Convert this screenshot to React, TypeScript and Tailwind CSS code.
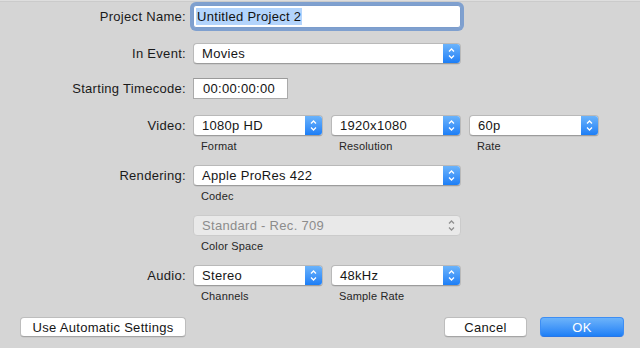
import React from "react";

const FONT = { fontFamily: '"Liberation Sans", Arial, sans-serif' };

// up/down chevrons for the popup buttons
function Chevrons({ color }: { color: string }) {
  return (
    <svg width="7" height="13" viewBox="0 0 7 13" fill="none">
      <path d="M1 4.5 L3.5 2 L6 4.5" stroke={color} strokeWidth="1.3" />
      <path d="M1 8.5 L3.5 11 L6 8.5" stroke={color} strokeWidth="1.3" />
    </svg>
  );
}

function Popup({ value, width, disabled }: { value: string; width: string; disabled?: boolean }) {
  if (disabled) {
    return (
      <div
        className={`${width} h-[21px] flex items-center rounded-[4px] border border-[#cbcbcb] bg-[#e9e9e9]`}
      >
        <span className="flex-1 pl-[8px] text-[13px] tracking-[0.3px] text-[#8c8c8c]">{value}</span>
        <div className="w-[17px] h-full flex items-center justify-center">
          <Chevrons color="#8f8f8f" />
        </div>
      </div>
    );
  }
  return (
    <div
      className={`${width} h-[21px] flex items-center rounded-[4px] border border-[#b9b9b9] border-b-[#9c9c9c] bg-white shadow-[0_0.5px_0.5px_rgba(0,0,0,0.12)] overflow-hidden`}
    >
      <span className="flex-1 pl-[8px] text-[13px] tracking-[0.3px] text-[#161616]">{value}</span>
      <div className="w-[17px] h-full flex items-center justify-center bg-gradient-to-b from-[#6ab3fb] to-[#1b7ef6]">
        <Chevrons color="#ffffff" />
      </div>
    </div>
  );
}

function Label({ children }: { children: React.ReactNode }) {
  return (
    <div className="w-[186px] shrink-0 text-right text-[13px] tracking-[0.3px] text-[#1a1a1a]">{children}</div>
  );
}

function SubLabel({ children, width }: { children: React.ReactNode; width: string }) {
  return <div className={`${width} pl-[8px] text-[11px] tracking-[0.15px] leading-[14px] text-[#262626]`}>{children}</div>;
}

function Row({ label, children }: { label?: string; children: React.ReactNode }) {
  return (
    <div className="flex items-center gap-[7px]">
      <Label>{label}</Label>
      {children}
    </div>
  );
}

function SubRow({ children }: { children: React.ReactNode }) {
  return (
    <div className="flex gap-[8px] pl-[193px] mt-[3px]">{children}</div>
  );
}

export default function App() {
  return (
    <div style={FONT} className="w-[640px] h-[348px] bg-[#d5d5d5] relative overflow-hidden">
      {/* window edge */}
      <div className="h-[2px] bg-[#dedede] border-b border-[#cbcbcb]" />

      <div className="flex flex-col pt-[3px]">
        <Row label="Project Name:">
          <div className="w-[268px] h-[23px] flex items-center rounded-[3px] border border-[#7c9dcc] bg-white shadow-[0_0_0_3px_#7fa0cf]">
            <span className="ml-[2px] px-[1px] bg-[#b3d4fc] text-[13px] tracking-[0.3px] leading-[17px] text-[#111]">
              Untitled Project 2
            </span>
          </div>
        </Row>

        <div className="mt-[15px]">
          <Row label="In Event:">
            <Popup value="Movies" width="w-[268px]" />
          </Row>
        </div>

        <div className="mt-[14px]">
          <Row label="Starting Timecode:">
            <div className="w-[95px] h-[21px] flex items-center border border-[#aaaaaa] border-t-[#9a9a9a] bg-white">
              <span className="pl-[9px] text-[13px] tracking-[0.3px] text-[#111]">00:00:00:00</span>
            </div>
          </Row>
        </div>

        <div className="mt-[16px]">
          <Row label="Video:">
            <div className="flex gap-[8px]">
              <Popup value="1080p HD" width="w-[130px]" />
              <Popup value="1920x1080" width="w-[130px]" />
              <Popup value="60p" width="w-[130px]" />
            </div>
          </Row>
          <SubRow>
            <SubLabel width="w-[130px]">Format</SubLabel>
            <SubLabel width="w-[130px]">Resolution</SubLabel>
            <SubLabel width="w-[130px]">Rate</SubLabel>
          </SubRow>
        </div>

        <div className="mt-[12px]">
          <Row label="Rendering:">
            <Popup value="Apple ProRes 422" width="w-[268px]" />
          </Row>
          <SubRow>
            <SubLabel width="w-[130px]">Codec</SubLabel>
          </SubRow>
        </div>

        <div className="mt-[12px]">
          <Row>
            <Popup value="Standard - Rec. 709" width="w-[268px]" disabled />
          </Row>
          <SubRow>
            <SubLabel width="w-[130px]">Color Space</SubLabel>
          </SubRow>
        </div>

        <div className="mt-[12px]">
          <Row label="Audio:">
            <div className="flex gap-[8px]">
              <Popup value="Stereo" width="w-[130px]" />
              <Popup value="48kHz" width="w-[130px]" />
            </div>
          </Row>
          <SubRow>
            <SubLabel width="w-[130px]">Channels</SubLabel>
            <SubLabel width="w-[130px]">Sample Rate</SubLabel>
          </SubRow>
        </div>

        {/* bottom buttons */}
        <div className="mt-[14px] flex items-center pl-[20px] pr-[16px]">
          <button className="w-[166px] h-[20px] rounded-[4px] border border-[#bdbdbd] border-b-[#a5a5a5] bg-white text-[13px] tracking-[0.3px] text-[#161616] shadow-[0_0.5px_0.5px_rgba(0,0,0,0.1)]">
            Use Automatic Settings
          </button>
          <div className="flex-1" />
          <button className="w-[83px] h-[20px] rounded-[4px] border border-[#bdbdbd] border-b-[#a5a5a5] bg-white text-[13px] tracking-[0.3px] text-[#161616] shadow-[0_0.5px_0.5px_rgba(0,0,0,0.1)]">
            Cancel
          </button>
          <button className="ml-[13px] w-[84px] h-[20px] rounded-[4px] border border-[#3d8ef4] border-b-[#2a76e6] bg-gradient-to-b from-[#6cb3fa] to-[#1c7ff6] text-[13px] tracking-[0.3px] text-white">
            OK
          </button>
        </div>
      </div>
    </div>
  );
}
